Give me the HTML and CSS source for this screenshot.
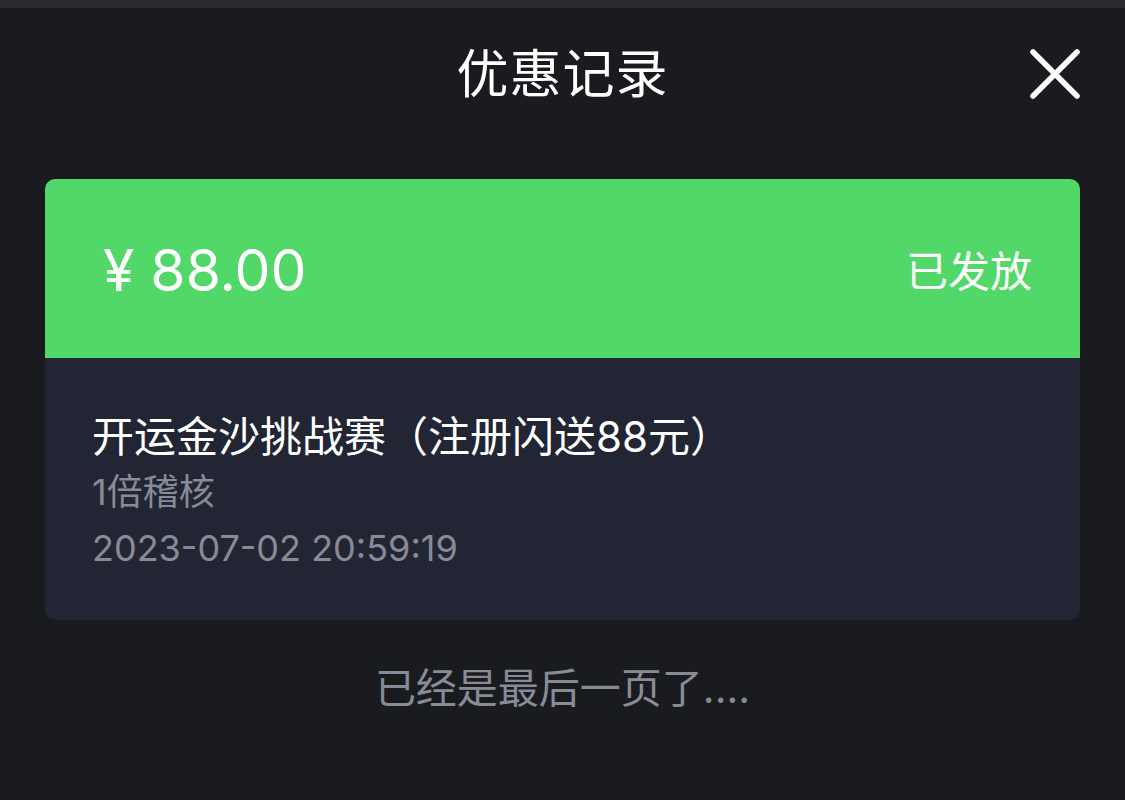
FILE: index.html
```html
<!DOCTYPE html>
<html lang="zh-CN">

<head>
    <meta charset="UTF-8" />
    <meta name="viewport" content="width=device-width, initial-scale=1" />
    <title>优惠记录</title>
    <link rel="stylesheet" href="styles.css">
</head>

<body>

    <div class="status-strip"></div>

    <header class="header">
        <h1 class="header-title">优惠记录</h1>
        <button class="close-btn" aria-label="关闭">
            <svg viewBox="0 0 52 52" width="52" height="52">
                <path d="M4 4 L48 48 M48 4 L4 48" stroke="#fff" stroke-width="5.5" stroke-linecap="round" fill="none" />
            </svg>
        </button>
    </header>

    <main class="list">
        <div class="record">
            <div class="record-top">
                <span class="amount">¥ 88.00</span>
                <span class="status">已发放</span>
            </div>
            <div class="record-body">
                <div class="record-name">开运金沙挑战赛（注册闪送88元）</div>
                <div class="record-meta">1倍稽核</div>
                <div class="record-meta">2023-07-02 20:59:19</div>
            </div>
        </div>

        <div class="list-end">已经是最后一页了....</div>
    </main>

</body>

</html>
```

FILE: styles.css
```css
html,
body {
    margin: 0;
    padding: 0;
    height: 100%;
    background-color: #1a1b1f;
    font-family: "Inter", "Noto Sans CJK SC", sans-serif;
    color: #fff;
    overflow: hidden;
}

.status-strip {
    height: 8px;
    background: #2c2c2e;
}

.header {
    position: relative;
    height: 134px;
    display: flex;
    align-items: center;
    justify-content: center;
}

.header-title {
    margin: 0;
    margin-top: -10px;
    font-size: 52px;
    font-weight: 400;
    letter-spacing: 1px;
}

.close-btn {
    position: absolute;
    right: 44px;
    top: 40px;
    padding: 0;
    border: none;
    background: none;
    cursor: pointer;
}

.close-btn svg {
    display: block;
}

.list {
    padding: 37px 45px 0;
}

.record {
    border-radius: 10px;
    overflow: hidden;
    background: #222634;
}

.record-top {
    height: 179px;
    background: #52d869;
    display: flex;
    align-items: center;
    justify-content: space-between;
    padding: 0 48px 0 58px;
}

.amount {
    font-size: 57px;
    font-weight: 400;
    margin-top: 4px;
}

.status {
    font-size: 42px;
}

.record-body {
    height: 262px;
    box-sizing: border-box;
    padding: 52px 47px 0;
}

.record-name {
    font-size: 42px;
    line-height: 54px;
}

.record-meta {
    font-size: 36px;
    line-height: 56px;
    color: #878b96;
}

.list-end {
    margin-top: 43px;
    text-align: center;
    font-size: 41px;
    line-height: 50px;
    color: #878b96;
}
```
